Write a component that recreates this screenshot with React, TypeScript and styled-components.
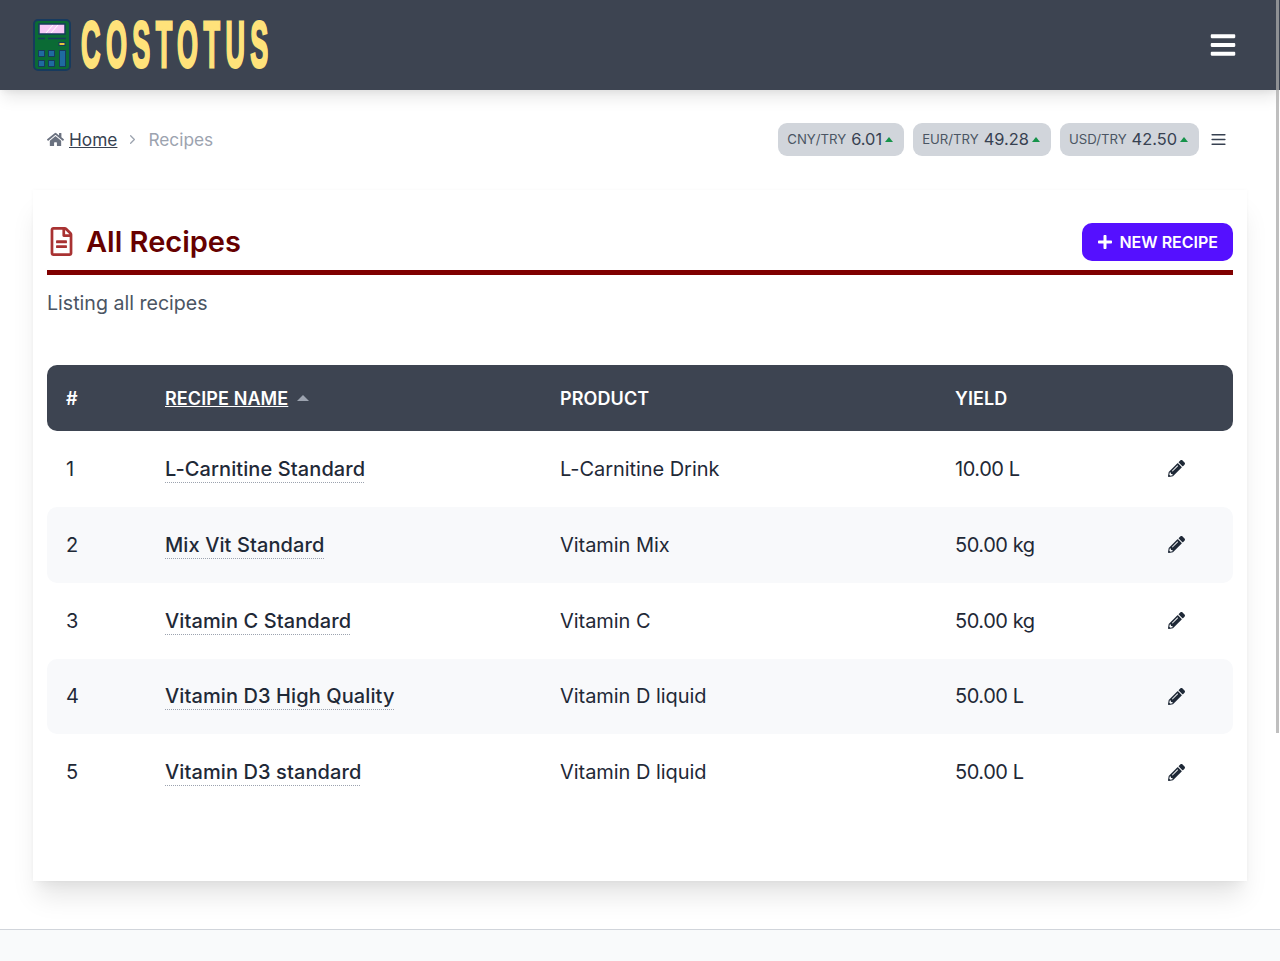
import React from 'react';
import styled, { createGlobalStyle } from 'styled-components';
import { FaHome, FaPencilAlt, FaPlus, FaRegFileAlt, FaBars } from 'react-icons/fa';
import { LuChevronRight, LuMenu } from 'react-icons/lu';

const GlobalStyle = createGlobalStyle`
  html, body {
    margin: 0;
    padding: 0;
    background: #fff;
    overflow: hidden;
  }
  body {
    font-family: Inter, "Noto Sans", "Liberation Sans", sans-serif;
    color: #1f2937;
  }
  * { box-sizing: border-box; }
`;

const Page = styled.div`
  height: 961px;
  display: flex;
  flex-direction: column;
  position: relative;
  overflow: hidden;
`;

const ScrollThumb = styled.div`
  position: absolute;
  top: 0;
  right: 1px;
  width: 3px;
  height: 733px;
  background: rgba(170, 170, 170, 0.75);
`;

const Header = styled.header`
  height: 90px;
  flex: none;
  background: #3d4451;
  display: flex;
  align-items: center;
  justify-content: space-between;
  padding: 0 43px 0 33px;
  box-shadow: 0 10px 15px -3px rgba(0, 0, 0, 0.1), 0 4px 6px -2px rgba(0, 0, 0, 0.05);
`;

const Brand = styled.div`
  display: flex;
  align-items: center;
  gap: 10px;
`;

const Wordmark = styled.span`
  font-family: "Liberation Sans", sans-serif;
  font-weight: 700;
  font-size: 27px;
  line-height: 50px;
  display: inline-block;
  width: 190px;
  white-space: nowrap;
  color: #ffe27a;
  letter-spacing: 5.4px;
  -webkit-text-stroke: 1.2px #ffe27a;
  text-shadow: 1px 0 0 #1f3a5f, -1px 0 0 #1f3a5f, 0 0.5px 0 #1f3a5f, 0 -0.5px 0 #1f3a5f;
  transform: scaleY(2.4);
`;

const Toolbar = styled.div`
  display: flex;
  align-items: center;
  justify-content: space-between;
  padding: 33px 47px 0 47px;
  height: 100px;
  flex: none;
`;

const Crumbs = styled.nav`
  display: flex;
  align-items: center;
  font-size: 17.3px;
  margin-bottom: 35px;
`;

const HomeLink = styled.a`
  color: #374151;
  text-decoration: underline;
  margin-left: 5px;
`;

const CrumbSep = styled.span`
  display: inline-flex;
  color: #9ca3af;
  margin: 0 8px;
`;

const CrumbCurrent = styled.span`
  color: #9ca3af;
`;

const Rates = styled.div`
  display: flex;
  align-items: center;
  gap: 9px;
  margin-bottom: 35px;
  margin-right: 5px;
`;

const RatePill = styled.div`
  height: 33px;
  display: flex;
  align-items: center;
  padding: 0 11px 0 9px;
  background: #d1d5db;
  border-radius: 9px;
  color: #374151;
`;

const RateName = styled.span`
  font-size: 13.2px;
  margin-right: 5px;
  color: #4b5563;
`;

const RateValue = styled.span`
  font-size: 16.4px;
  margin-right: 3px;
`;

const RateUp = styled.span`
  width: 0;
  height: 0;
  border-left: 4.5px solid transparent;
  border-right: 4.5px solid transparent;
  border-bottom: 5px solid #16934a;
`;

const MenuButton = styled.span`
  display: inline-flex;
  color: #374151;
  margin-left: 1px;
`;

const Card = styled.main`
  margin: 0 33px;
  height: 691px;
  flex: none;
  padding: 27px 14px 0;
  background: #fff;
  box-shadow: 0 20px 25px -5px rgba(0, 0, 0, 0.1), 0 10px 10px -5px rgba(0, 0, 0, 0.04), 0 0 4px rgba(0, 0, 0, 0.03);
`;

const TitleRow = styled.div`
  display: flex;
  align-items: center;
  justify-content: space-between;
  height: 50px;
  border-bottom: 5px solid #800000;
  padding-bottom: 3px;
  box-sizing: content-box;
`;

const Title = styled.h1`
  margin: 0;
  display: flex;
  align-items: center;
  gap: 10px;
  font-size: 29px;
  line-height: 34px;
  font-weight: 600;
  color: #660000;
  padding-bottom: 1px;
  svg { color: #a83232; }
`;

const NewButton = styled.button`
  height: 38px;
  padding: 0 15px;
  display: flex;
  align-items: center;
  gap: 6px;
  border: 0;
  border-radius: 10px;
  background: #5510ff;
  color: #fff;
  font: 600 16px Inter, sans-serif;
`;

const Lead = styled.p`
  margin: 16px 0 50px;
  font-size: 19.6px;
  line-height: 24px;
  color: #4b5563;
`;

const TableGrid = styled.div`
  display: flex;
  flex-direction: column;
`;

const Row = styled.div<{ $head?: boolean; $shaded?: boolean }>`
  display: grid;
  grid-template-columns: 99px 395px 395px 1fr 114px;
  align-items: center;
  height: ${p => (p.$head ? '66px' : '75.85px')};
  padding-left: 19px;
  border-radius: 10px;
  font-size: ${p => (p.$head ? '18px' : '20px')};
  letter-spacing: ${p => (p.$head ? '0.1px' : '-0.05px')};
  color: ${p => (p.$head ? '#fff' : '#1f2937')};
  font-weight: ${p => (p.$head ? 600 : 400)};
  background: ${p => (p.$head ? '#3d4451' : p.$shaded ? '#f8f9fb' : 'transparent')};
`;

const SortHead = styled.span`
  display: inline-flex;
  align-items: center;
  gap: 9px;
`;

const SortLabel = styled.span`
  text-decoration: underline;
`;

const SortCaret = styled.span`
  width: 0;
  height: 0;
  border-left: 6px solid transparent;
  border-right: 6px solid transparent;
  border-bottom: 6px solid #9ca3af;
`;

const RecipeLink = styled.a`
  justify-self: start;
  font-weight: 500;
  letter-spacing: 0.1px;
  color: #1f2937;
  text-decoration: underline dotted #9ca3af 1px;
  text-decoration-skip-ink: none;
  text-underline-offset: 6px;
`;

const YieldCell = styled.span`
  letter-spacing: -0.45px;
`;

const EditCell = styled.span`
  display: inline-flex;
  justify-content: center;
  color: #1f2937;
`;

const Footer = styled.footer`
  margin-top: 48px;
  flex: 1;
  background: #f9fafb;
  border-top: 1px solid #d1d5db;
`;

const rates = [
  { name: 'CNY/TRY', value: '6.01' },
  { name: 'EUR/TRY', value: '49.28' },
  { name: 'USD/TRY', value: '42.50' },
];

const recipes = [
  { name: 'L-Carnitine Standard', product: 'L-Carnitine Drink', yieldText: '10.00 L' },
  { name: 'Mix Vit Standard', product: 'Vitamin Mix', yieldText: '50.00 kg' },
  { name: 'Vitamin C Standard', product: 'Vitamin C', yieldText: '50.00 kg' },
  { name: 'Vitamin D3 High Quality', product: 'Vitamin D liquid', yieldText: '50.00 L' },
  { name: 'Vitamin D3 standard', product: 'Vitamin D liquid', yieldText: '50.00 L' },
];

const CalculatorLogo = () => (
  <svg width="38" height="52" viewBox="0 0 38 52" aria-hidden="true">
    <rect x="1" y="1" width="36" height="50" rx="4" fill="#0b6b35" stroke="#173a5e" strokeWidth="2" />
    <rect x="6" y="5" width="26" height="10" fill="#f6c9f7" stroke="#173a5e" strokeWidth="1.5" />
    <path d="M13 14 L20 6 M18 14 L25 6" stroke="#fff" strokeWidth="1" />
    <path d="M5 19.5 H12 M15 19.5 H33" stroke="#173a5e" strokeWidth="1.5" />
    <rect x="26" y="23.5" width="6" height="3" fill="#e8c33c" stroke="#173a5e" />
    <g fill="#1f6aa0" stroke="#173a5e">
      <rect x="5.5" y="31.5" width="6" height="6" />
      <rect x="15.5" y="31.5" width="6" height="6" />
      <rect x="5.5" y="41.5" width="6" height="6" />
      <rect x="15.5" y="41.5" width="6" height="6" />
      <rect x="26.5" y="31.5" width="6" height="16" />
    </g>
  </svg>
);

const App: React.FC = () => (
  <Page>
    <GlobalStyle />
    <Header>
      <Brand>
        <CalculatorLogo />
        <Wordmark>COSTOTUS</Wordmark>
      </Brand>
      <FaBars size={28} color="#fff" />
    </Header>
    <Toolbar>
      <Crumbs>
        <FaHome size={17} color="#6b7280" />
        <HomeLink>Home</HomeLink>
        <CrumbSep><LuChevronRight size={15} /></CrumbSep>
        <CrumbCurrent>Recipes</CrumbCurrent>
      </Crumbs>
      <Rates>
        {rates.map(rate => (
          <RatePill key={rate.name}>
            <RateName>{rate.name}</RateName>
            <RateValue>{rate.value}</RateValue>
            <RateUp />
          </RatePill>
        ))}
        <MenuButton><LuMenu size={19} /></MenuButton>
      </Rates>
    </Toolbar>
    <Card>
      <TitleRow>
        <Title><FaRegFileAlt size={29} />All Recipes</Title>
        <NewButton><FaPlus size={16} />NEW RECIPE</NewButton>
      </TitleRow>
      <Lead>Listing all recipes</Lead>
      <TableGrid>
        <Row $head>
          <span>#</span>
          <SortHead><SortLabel>RECIPE NAME</SortLabel><SortCaret /></SortHead>
          <span>PRODUCT</span>
          <span>YIELD</span>
          <span />
        </Row>
        {recipes.map((recipe, index) => (
          <Row key={recipe.name} $shaded={index % 2 === 1}>
            <span>{index + 1}</span>
            <RecipeLink>{recipe.name}</RecipeLink>
            <span>{recipe.product}</span>
            <YieldCell>{recipe.yieldText}</YieldCell>
            <EditCell><FaPencilAlt size={17} /></EditCell>
          </Row>
        ))}
      </TableGrid>
    </Card>
    <Footer />
    <ScrollThumb />
  </Page>
);

export default App;
